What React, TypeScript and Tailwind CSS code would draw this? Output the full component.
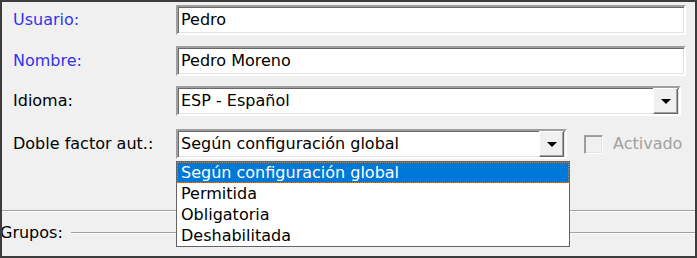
import React from "react";

const font = { fontFamily: '"DejaVu Sans", "Liberation Sans", sans-serif' };

function Sunken({ width, children }: { width: string; children: React.ReactNode }) {
  return (
    <div
      className={`${width} h-[30px] bg-white border-2 border-t-[#a0a0a0] border-l-[#a0a0a0] border-b-[#ffffff] border-r-[#ffffff] shadow-[inset_1px_1px_0_#696969,inset_-1px_-1px_0_#e3e3e3] flex items-center`}
    >
      {children}
    </div>
  );
}

function ArrowButton() {
  return (
    <div className="ml-auto mr-[1px] h-[26px] w-[25px] bg-[#f0f0f0] border border-t-[#ffffff] border-l-[#ffffff] border-b-[#696969] border-r-[#696969] shadow-[inset_-1px_-1px_0_#a0a0a0] flex items-center justify-center">
      <svg width="10" height="5" viewBox="0 0 10 5">
        <path d="M0 0h10L5 5z" fill="#000" />
      </svg>
    </div>
  );
}

export default function App() {
  const options = ["Según configuración global", "Permitida", "Obligatoria", "Deshabilitada"];
  return (
    <div
      className="relative w-[697px] h-[258px] overflow-hidden bg-[#f0f0f0] border-2 border-[#3c3c3c] text-[16px] leading-[20px] text-black"
      style={font}
    >
      <div className="flex flex-col pt-[3px]">
        <div className="flex items-center pl-[11px]">
          <span className="w-[163px] text-[#3333ee]">Usuario:</span>
          <Sunken width="w-[510px]">
            <span className="pl-[3px]">Pedro</span>
          </Sunken>
        </div>
        <div className="flex items-center pl-[11px] mt-[11px]">
          <span className="w-[163px] text-[#3333ee]">Nombre:</span>
          <Sunken width="w-[510px]">
            <span className="pl-[3px]">Pedro Moreno</span>
          </Sunken>
        </div>
        <div className="flex items-center pl-[11px] mt-[10px]">
          <span className="w-[163px]">Idioma:</span>
          <Sunken width="w-[505px]">
            <span className="pl-[3px]">ESP - Español</span>
            <ArrowButton />
          </Sunken>
        </div>
        <div className="flex items-center pl-[11px] mt-[13px]">
          <span className="w-[163px]">Doble factor aut.:</span>
          <Sunken width="w-[391px]">
            <span className="pl-[3px]">Según configuración global</span>
            <ArrowButton />
          </Sunken>
          <div className="ml-[17px] w-[19px] h-[19px] bg-[#f0f0f0] border border-t-[#a0a0a0] border-l-[#a0a0a0] border-b-[#ffffff] border-r-[#ffffff] shadow-[inset_1px_1px_0_#9a9a9a,inset_-1px_-1px_0_#e3e3e3]" />
          <span className="ml-[10px] text-[#a0a0a0]">Activado</span>
        </div>
        <div className="mt-[51px] h-[2px] border-t border-t-[#a0a0a0] border-b border-b-[#ffffff]" />
        <div className="flex items-center mt-[11px] h-[20px] -ml-[2px]">
          <span>Grupos:</span>
          <div className="flex-1 ml-[8px] h-[2px] border-t border-t-[#a0a0a0] border-b border-b-[#ffffff]" />
        </div>
      </div>

      <div className="absolute left-[174px] top-[159px] w-[394px] h-[86px] bg-white border border-[#646464] flex flex-col">
        {options.map((o, i) => (
          <div
            key={o}
            className={
              i === 0
                ? "h-[21px] pl-[3px] flex items-center bg-[#0078d7] text-white border border-dotted border-[#c8853c]"
                : "h-[21px] pl-[4px] flex items-center"
            }
          >
            {o}
          </div>
        ))}
      </div>
    </div>
  );
}
